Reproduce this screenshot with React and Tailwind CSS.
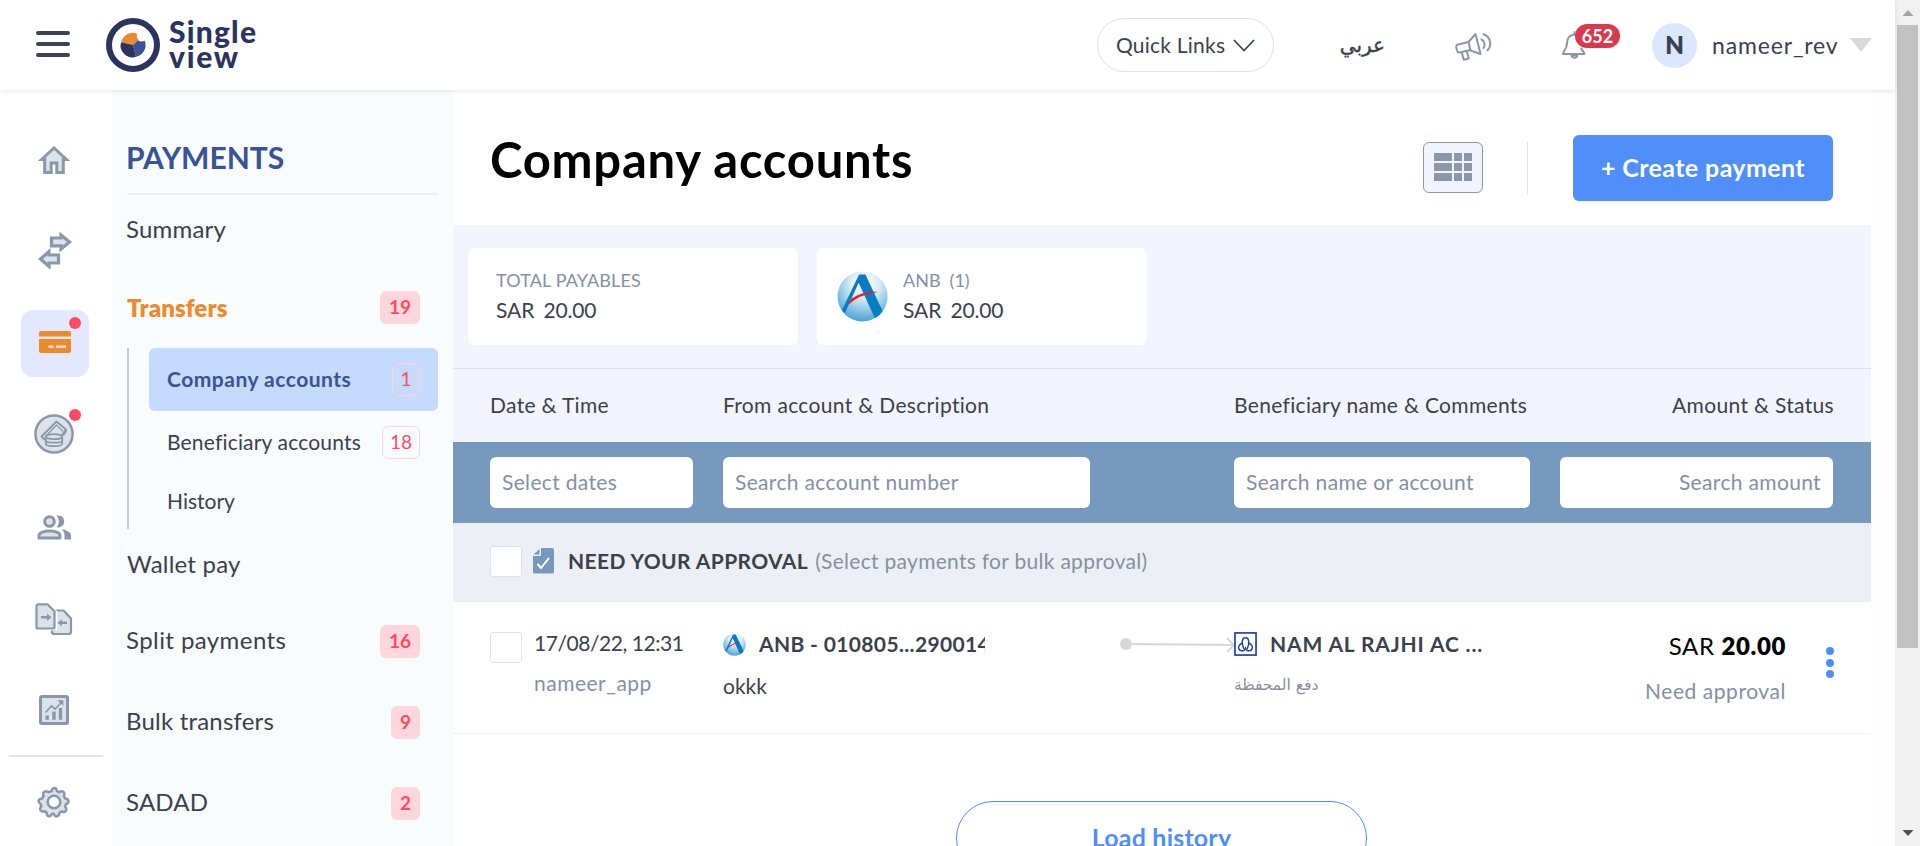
import { useId } from "react";

/* ---------- icons ---------- */

function HomeIcon() {
  return (
    <svg width="34" height="30" viewBox="0 0 34 30" className="block">
      <path d="M4.500 14.500 17 3l12.500 11.500h-3.200v13h-6.500v-9.500h-5.600v9.500H7.700v-13z" fill="#dbe2ea" stroke="#8b97a8" strokeWidth="3" />
    </svg>
  );
}

function TransferIcon() {
  return (
    <svg width="36" height="38" viewBox="0 0 36 38" className="block">
      <g fill="#dbe2ea" stroke="#8b97a8" strokeWidth="3.200">
        <path d="M14.500 7h9.500V4l8.500 7-8.500 7v-3.200h-9.500z" />
        <path d="M21.500 24H12V20.500l-8.500 7.500 8.500 7.500V32h9.500z" />
      </g>
    </svg>
  );
}

function CardIcon() {
  return (
    <svg width="32" height="22" viewBox="0 0 32 22" className="block">
      <path d="M2 0h28a2 2 0 0 1 2 2v3.500H0V2a2 2 0 0 1 2-2z" fill="#ec8b2e" />
      <path d="M0 8h32v12a2 2 0 0 1-2 2H2a2 2 0 0 1-2-2z" fill="#ec8b2e" />
      <path d="M9.500 15.700h5M17 15.700h10" stroke="#e3e8ff" strokeWidth="2.200" />
    </svg>
  );
}

function CoinsIcon() {
  return (
    <svg width="40" height="40" viewBox="0 0 40 40" fill="none" stroke="#8b97a8" className="block">
      <circle cx="20" cy="20" r="18.600" fill="#dbe2ea" strokeWidth="2.500" />
      <g strokeWidth="1.800" strokeLinejoin="round">
        <path d="M11 26 7.500 22.500 22.500 7.500l9.500 8-4 5.500" />
        <path d="M32 15.500c.500 2.500-1 4.500-4.500 6.500" />
        <path d="M12.500 21.500 22.500 11l6.500 6.500" strokeWidth="1.200" />
        <ellipse cx="20" cy="22.700" rx="8.200" ry="2.500" />
        <path d="M11.800 22.700v7c0 3.300 16.400 3.300 16.400 0v-7M11.800 26.200c0 3.300 16.400 3.300 16.400 0" />
      </g>
    </svg>
  );
}

function PeopleIcon() {
  return (
    <svg width="34" height="25" viewBox="0 0 34 25" className="block">
      <g fill="#dbe2ea" stroke="#8b97a8" strokeWidth="3">
        <circle cx="12.500" cy="6.500" r="4.800" />
        <path d="M2 23v-2.500c0-6 21-6 21 0V23z" strokeLinejoin="round" />
      </g>
      <path d="M19.500.600c10-1.600 10.500 13 0 11.700 3.200-3.200 3.200-8.200 0-11.700zM24.500 14.300c5 .700 9.500 3 9.500 6v4.200h-6.500v-4c0-2.500-1-4.500-3-6.200z" fill="#8b97a8" />
    </svg>
  );
}

function FilesIcon() {
  return (
    <svg width="38" height="33" viewBox="0 0 38 33" className="block">
      <g fill="#dbe2ea" stroke="#8b97a8" strokeWidth="2.200" strokeLinejoin="round">
        <path d="M21 7.500h7.500l7.500 8V29a2 2 0 0 1-2 2H19a2 2 0 0 1-2-2v-2.500h4z" />
      </g>
      <path d="M0 0h14l8.500 8.500v19H0z" fill="#fff" />
      <path d="M3 1.300h9.500l7 7V24a1.500 1.500 0 0 1-1.500 1.500H3A1.500 1.500 0 0 1 1.500 24V2.800A1.500 1.500 0 0 1 3 1.300z" fill="#dbe2ea" stroke="#8b97a8" strokeWidth="2.200" />
      <g fill="none" stroke="#8b97a8" strokeWidth="2.400">
        <path d="M6 14.200h8M32 19.800h-7" />
      </g>
      <path d="M12 10.500l4.500 3.700-4.500 3.700zM27 16l-4.500 3.800L27 23.500z" fill="#8b97a8" />
    </svg>
  );
}

function ChartIcon() {
  return (
    <svg width="30" height="30" viewBox="0 0 30 30" fill="none" stroke="#8b97a8" className="block">
      <rect x="1.500" y="1.500" width="27" height="27" rx="1.500" fill="#dbe2ea" strokeWidth="3" />
      <path d="M6.500 17.500l6-6.500 3.500 3L23 7" strokeWidth="1.700" />
      <path d="M18.500 5.300h5.800v5.800z" fill="#8b97a8" stroke="none" />
      <path d="M8.200 20.500v4.200M15 16.500v8.200M21.500 13v11.700" strokeWidth="3.400" />
    </svg>
  );
}

function GearIcon() {
  return (
    <svg width="34" height="34" viewBox="0 0 34 34" className="block" stroke="#8b97a8" strokeWidth="2.600" strokeLinejoin="round">
      <path
        d="M14.200 5.500C15 1 19 1 19.800 5.500q1.200.300 2.300 1C25.800 4 28.700 7 27 10.700q.800 1 1.200 2.300c4.500.300 4.800 4.500.700 6q-.100 1.400-.700 2.500c2.800 3.500.300 6.600-3.800 5q-1 .900-2.200 1.500c-.300 4.300-4.300 5-5.700 1h-1.900c-1.800 4-5.600 3-5.500-1.200q-1.200-.600-2.100-1.500c-4 1.400-6.300-2-3.500-5.100q-.500-1.100-.600-2.400C-.500 17 0 13.200 4.500 13q.500-1.300 1.400-2.500C4.200 6.800 7.200 4 10.900 6.500q1.500-.700 3.300-1z"
        fill="#dbe2ea"
        transform="translate(1 1) scale(.96)"
      />
      <circle cx="17" cy="17" r="6.300" fill="#fff" />
    </svg>
  );
}

function LogoMark() {
  return (
    <svg width="54" height="54" viewBox="0 0 54 54" className="block">
      <circle cx="27" cy="27" r="24" fill="none" stroke="#2b335f" strokeWidth="6" />
      <path d="M27 27 15.200 24.200A12 12 0 0 1 31 15.500q-.800 5 2 6.500z" fill="#ec8b2e" />
      <path d="M27 27l5-4.500q3 2 6.800.300A12 12 0 0 1 30 38.800z" fill="#3a5396" />
      <path d="M27 27l3 11.800A12 12 0 0 1 15 24.200z" fill="#2b335f" />
    </svg>
  );
}

function MegaphoneIcon() {
  return (
    <svg width="37" height="28" viewBox="0 0 37 28" fill="none" stroke="#8b97a8" strokeWidth="2" strokeLinejoin="round" strokeLinecap="round" className="block">
      <path d="M13.500 9 20.500 1l5 20-10-3.500z" />
      <path d="M13.500 9 2.500 11.700c-1.300.400-1.500 1.300-1.300 2.500l1 3.800c.400 1.300 1.300 1.700 2.500 1.400L15.500 17" />
      <path d="M6.800 19.500l2 7.300 5-1.300-2-7.500" />
      <path d="M26.500 6.500c3 1.500 4 5.500 2 8.500M28.500 1.300c7.500 2.500 8.500 12 4 16" />
    </svg>
  );
}

function BellIcon() {
  return (
    <svg width="26" height="28" viewBox="0 0 26 28" fill="none" stroke="#8b97a8" strokeWidth="2" strokeLinecap="round" strokeLinejoin="round" className="block">
      <path d="M12.500 3.500C7 4 5 8 5 12.500c0 6-4 7-4 10.500h21.500c0-2-2-2.500-3.300-5.500" />
      <path d="M12.500 1v2.500" />
      <path d="M9.500 24c.700 3.500 5.300 3.500 6 0z" />
    </svg>
  );
}

function AnbLogo({ size }) {
  const id = useId();
  return (
    <svg width={size} height={size} viewBox="0 0 52 52" className="block shrink-0">
      <defs>
        <radialGradient id={id} cx=".55" cy=".25" r=".8">
          <stop offset="0" stopColor="#fff" />
          <stop offset=".35" stopColor="#dcedf6" />
          <stop offset="1" stopColor="#3c9bd2" />
        </radialGradient>
        <clipPath id={id + "c"}>
          <circle cx="26" cy="26" r="25.500" />
        </clipPath>
      </defs>
      <circle cx="26" cy="26" r="25.500" fill={`url(#${id})`} />
      <g clipPath={`url(#${id + "c"})`}>
        <path d="M22.500 3.500h6.500L48 44l-9 5L22 12 8 43l-3-3z" fill="#057cc4" />
        <path d="M15 28q12-8 27-6.500Q22 24 11 35z" fill="#ee1c25" />
      </g>
    </svg>
  );
}

function RajhiLogo() {
  return (
    <svg width="23" height="24" viewBox="0 0 22 23" fill="none" stroke="#21429b" className="block shrink-0">
      <rect x=".900" y=".900" width="20.200" height="21.200" fill="#fff" strokeWidth="1.600" />
      <g strokeWidth="1.400" strokeLinecap="round">
        <path d="M9.300 15.800c-2-4-2.300-10.300 1.700-10.300s3.700 6.300 1.700 10.300" />
        <path d="M8 10.500c-3 1-4.500 4-3 6.300 1.500 2 5 1.500 6-1.300 1 2.800 4.500 3.300 6 1.300 1.500-2.300 0-5.300-3-6.300" />
      </g>
    </svg>
  );
}

function ApprovalIcon() {
  return (
    <svg width="21" height="26" viewBox="0 0 21 26" className="block shrink-0">
      <path d="M8 0h11a2 2 0 0 1 2 2v22a1.500 1.500 0 0 1-1.500 1.500h-18A1.500 1.500 0 0 1 0 24V8h6.500A1.500 1.500 0 0 0 8 6.500z" fill="#7799be" />
      <path d="M6.500 1v5.500H.500z" fill="#7799be" />
      <path d="M4.500 16l3.500 4 8-10" fill="none" stroke="#fff" strokeWidth="2" />
    </svg>
  );
}

function FlowArrow() {
  return (
    <svg width="116" height="16" viewBox="0 0 116 16" fill="none" stroke="#d6d7d9" className="block shrink-0">
      <circle cx="6" cy="8" r="6" fill="#d6d7d9" stroke="none" />
      <path d="M6 8l108 1" strokeWidth="2" />
      <path d="M107 2l7 7-7 7" strokeWidth="2" />
    </svg>
  );
}

/* ---------- pieces ---------- */

function Dot({ className }) {
  return <span className={`absolute size-3 rounded-full bg-[#ff4b66] ${className}`} />;
}

function Badge({ children, outline, wide }) {
  return (
    <span
      className={`flex h-[33px] items-center justify-center rounded-md text-[19px] text-[#ff4b66] ${
        outline
          ? `border border-[#ffd3da] ${wide ? "w-[38px]" : "w-7"}`
          : `bg-[#ffd6dc] font-bold ${wide ? "w-10" : "w-[29px]"}`
      }`}
    >
      {children}
    </span>
  );
}

function NavRow({ label, badge, wide, active, className }) {
  return (
    <div className={`flex items-center justify-between pr-[18px] ${className}`}>
      <span className={active ? "text-[24px] font-extrabold tracking-[0.1px] text-[#ec8b2e]" : "text-[24px] tracking-[0.2px]"}>{label}</span>
      {badge && <Badge wide={wide}>{badge}</Badge>}
    </div>
  );
}

function Rail() {
  return (
    <nav className="flex w-28 shrink-0 flex-col items-center bg-white">
      <div className="mt-[55px] -ml-1"><HomeIcon /></div>
      <div className="mt-[56px] -ml-[3px]"><TransferIcon /></div>
      <div className="relative mt-[41px] -ml-0.5 flex h-[67px] w-[68px] justify-center rounded-xl bg-[#e3e8ff] pt-[21px]">
        <CardIcon />
        <Dot className="top-[7px] left-12" />
      </div>
      <div className="relative mt-[37px] -ml-1">
        <CoinsIcon />
        <Dot className="-top-[5px] left-[35px]" />
      </div>
      <div className="mt-[61px] -ml-1"><PeopleIcon /></div>
      <div className="mt-[63px] -ml-1"><FilesIcon /></div>
      <div className="mt-[59px] -ml-1"><ChartIcon /></div>
      <div className="mt-[30px] h-0.5 w-[94px] bg-[#e4e5e7]" />
      <div className="mt-7 -ml-1"><GearIcon /></div>
    </nav>
  );
}

function Panel() {
  return (
    <aside className="w-[341px] shrink-0 overflow-hidden bg-[#f8fcfd] px-[15px]">
      <div className="flex h-[105px] items-center border-b-2 border-[#ebeff1] pt-[31px] text-[30px] font-bold text-[#3a5396]"><span className="-ml-px">PAYMENTS</span></div>
      <NavRow label="Summary" className="h-[68px] [&>span:first-child]:-ml-px" />
      <NavRow label="Transfers" badge="19" wide active className="mt-5 h-[49px]" />
      <div className="mt-4 h-[181px] border-l-2 border-[#c3c9d5] pl-[20px] text-[21px]">
        <div className="flex h-[63px] items-center justify-between rounded-md bg-[#c5dafc] pr-[18px] pl-[18px]">
          <span className="pb-0.5 font-bold tracking-[0.5px] text-[#3a5396]">Company accounts</span>
          <Badge outline>1</Badge>
        </div>
        <div className="flex h-[63px] items-center justify-between pr-[18px] pl-[18px]">
          <span className="pb-0.5 tracking-[0.18px]">Beneficiary accounts</span>
          <Badge outline wide>18</Badge>
        </div>
        <div className="flex h-[54px] items-center pl-[18px]">History</div>
      </div>
      <NavRow label="Wallet pay" className="h-[70px]" />
      <NavRow label="Split payments" badge="16" wide className="mt-0.5 h-[81px] [&>span:first-child]:-ml-px [&>span:first-child]:pb-[3px] [&>span:first-child]:tracking-[0.42px]" />
      <NavRow label="Bulk transfers" badge="9" className="h-[81px] [&>span:first-child]:-ml-px [&>span:first-child]:pb-[3px]" />
      <NavRow label="SADAD" badge="2" className="h-[81px] [&>span:first-child]:-ml-px [&>span:first-child]:pb-[3px]" />
    </aside>
  );
}

function Header() {
  return (
    <header className="relative z-10 flex h-[90px] shrink-0 items-center bg-white pl-9 shadow-[0_1px_5px_rgba(0,0,0,0.1)]">
      <div className="flex w-[34px] flex-col gap-[7px] pb-0.5">
        <span className="h-1 rounded-full bg-[#3b4554]" />
        <span className="h-1 rounded-full bg-[#3b4554]" />
        <span className="h-1 rounded-full bg-[#3b4554]" />
      </div>
      <div className="ml-9 flex items-center pb-px"><LogoMark /></div>
      <div className="ml-[9px] flex w-[95px] flex-col pb-[3px] text-[30px] leading-[25px] font-black text-[#2b335f]">
        <span className="tracking-[1.2px]">Single</span>
        <span className="tracking-[1.7px]">view</span>
      </div>
      <div className="ml-[833px] flex h-[54px] w-[177px] items-center rounded-full border border-[#dde1e8] pl-[18px]">
        <span className="text-[21px] tracking-[0.22px]">Quick Links</span>
        <svg width="22" height="13" viewBox="0 0 22 13" className="ml-[8px]" fill="none" stroke="#3b4252" strokeWidth="1.700">
          <path d="M1 1l10 10.500L21 1" />
        </svg>
      </div>
      <span dir="rtl" className="ml-[67px] w-[44px] font-['DejaVu_Sans'] text-[20px] text-nowrap [-webkit-text-stroke:0.4px]">عربي</span>
      <div className="ml-[70px] pt-1"><MegaphoneIcon /></div>
      <div className="relative ml-[70px]">
        <BellIcon />
        <span className="absolute -top-[7px] left-[13px] flex h-6 w-[45px] items-center justify-center rounded-full bg-[#d8394b] text-[18px] font-bold text-white">652</span>
      </div>
      <div className="ml-[64px] flex size-[45px] items-center justify-center rounded-full bg-[#dbe7ff] text-[24px] font-extrabold">N</div>
      <span className="ml-[15px] w-[126px] text-[23px] tracking-[0.85px] text-nowrap">nameer_rev</span>
      <svg width="22" height="14" viewBox="0 0 22 14" className="ml-3 block"><path d="M0 0h22L11 14z" fill="#d8d8d8" /></svg>
    </header>
  );
}

function GridButton() {
  return (
    <div className="flex h-[51px] w-[60px] items-center justify-center rounded-md border border-[#8b97a8] bg-[#f2f5fd]">
      <div className="grid grid-cols-[18px_8px_8px] gap-x-[2px] gap-y-[2px]">
        {Array.from({ length: 9 }, (_, i) => (
          <span key={i} className="h-2 bg-[#8b97a8]" />
        ))}
      </div>
    </div>
  );
}

function SearchBox({ children, className }) {
  return <div className={`flex h-[51px] items-center rounded-md bg-white px-3 pb-0.5 text-[21px] tracking-[0.34px] text-nowrap text-[#8590a2] ${className}`}>{children}</div>;
}

function Checkbox({ className }) {
  return <span className={`block h-[31px] w-8 shrink-0 rounded-[3px] border border-[#dde3ec] bg-white ${className}`} />;
}

function Main() {
  return (
    <main className="flex w-[1418px] shrink-0 flex-col overflow-hidden bg-white">
      <div className="flex h-[135px] shrink-0 items-center pl-[37px]">
        <h1 className="w-[933px] pt-1 text-[49px] font-bold tracking-[0.75px] text-black">Company accounts</h1>
        <div className="flex items-center pt-[21px]">
          <div className="pb-0.5"><GridButton /></div>
          <span className="ml-11 h-[53px] w-px bg-[#dfe3ea]" />
          <div className="ml-[45px] flex h-[66px] w-[260px] items-center justify-center rounded-md bg-[#508ffa] text-[25px] font-bold tracking-[0.4px] text-white">+ Create payment</div>
        </div>
      </div>

      <div className="flex h-36 shrink-0 gap-[19px] border-b border-[#dadfe9] bg-[#f2f5fd] pt-[23px] pl-[15px]">
        <div className="flex h-[97px] w-[330px] flex-col justify-center rounded-md bg-white pb-0.5 pl-[28px]">
          <span className="text-[18px] leading-[29px] tracking-[0.15px] text-[#8590a2]">TOTAL PAYABLES</span>
          <span className="flex gap-[9px] text-[21px] leading-[30px]"><span>SAR</span><span className="tracking-[-0.2px]">20.00</span></span>
        </div>
        <div className="flex h-[97px] w-[330px] items-center rounded-md bg-white pl-5">
          <AnbLogo size={51} />
          <div className="ml-[15px] flex flex-col pb-0.5">
            <span className="flex gap-[9px] text-[18px] leading-[29px] text-[#8590a2]"><span>ANB</span><span>(1)</span></span>
            <span className="flex gap-[9px] text-[21px] leading-[30px]"><span>SAR</span><span className="tracking-[-0.2px]">20.00</span></span>
          </div>
        </div>
      </div>

      <div className="flex h-[73px] shrink-0 items-center bg-[#f2f5fd] px-[37px] pb-0.5 text-[21px] tracking-[0.33px]">
        <span className="w-[233px]">Date &amp; Time</span>
        <span className="w-[511px]">From account &amp; Description</span>
        <span className="flex-1">Beneficiary name &amp; Comments</span>
        <span>Amount &amp; Status</span>
      </div>

      <div className="flex h-[81px] shrink-0 items-center bg-[#7799be] pl-[37px]">
        <SearchBox className="w-[203px]">Select dates</SearchBox>
        <SearchBox className="ml-[30px] w-[367px]">Search account number</SearchBox>
        <SearchBox className="ml-[144px] w-[296px]">Search name or account</SearchBox>
        <SearchBox className="ml-[30px] w-[273px] justify-end">Search amount</SearchBox>
      </div>

      <div className="flex h-[79px] shrink-0 items-center border-b border-[#e9edf4] bg-[#ecf0f5] pb-0.5 pl-[37px]">
        <Checkbox />
        <div className="ml-[11px]"><ApprovalIcon /></div>
        <span className="ml-[14px] text-[21px] font-bold tracking-[0.4px]">NEED YOUR APPROVAL</span>
        <span className="ml-[7px] text-[21px] tracking-[0.29px] text-[#8590a2]">(Select payments for bulk approval)</span>
      </div>

      <div className="flex h-[132px] shrink-0 border-b border-[#eceff5] pl-[37px] text-[21px] text-nowrap">
        <Checkbox className="mt-[30px]" />
        <div className="ml-3 w-[189px] pt-[25px]">
          <div className="leading-8 tracking-[-0.45px]">17/08/22, 12:31</div>
          <div className="mt-2 leading-8 tracking-[0.5px] text-[#8590a2]">nameer_app</div>
        </div>
        <div className="w-[397px] pt-[26px]">
          <div className="flex w-[262px] items-center overflow-hidden leading-8">
            <AnbLogo size={23} />
            <span className="ml-[13px] font-bold tracking-[0.35px]">ANB - 010805...290014</span>
          </div>
          <div className="mt-[10px] leading-8">okkk</div>
        </div>
        <div className="w-[114px] pt-[34px]"><FlowArrow /></div>
        <div className="w-[402px] pt-[26px]">
          <div className="flex items-center leading-8">
            <RajhiLogo />
            <span className="ml-[13px] font-bold tracking-[0.85px]">NAM AL RAJHI AC ...</span>
          </div>
          <div className="mt-[11px] font-['DejaVu_Sans'] text-[15.500px] leading-7 text-[#8590a2]">دفع المحفظة</div>
        </div>
        <div className="w-[150px] pt-[26px] text-right">
          <div className="flex justify-end gap-[7px] text-[24px] leading-9 text-black">
            <span className="tracking-[0.6px]">SAR</span>
            <span className="font-extrabold tracking-[0.6px]">20.00</span>
          </div>
          <div className="mt-[11px] leading-8 tracking-[0.55px] text-[#8590a2]">Need approval</div>
        </div>
        <div className="ml-[40px] flex flex-col gap-[3.500px] pt-[45px]">
          <span className="size-2 rounded-full bg-[#508ffa]" />
          <span className="size-2 rounded-full bg-[#508ffa]" />
          <span className="size-2 rounded-full bg-[#508ffa]" />
        </div>
      </div>

      <div className="mt-[67px] ml-[503px] flex h-[74px] w-[411px] shrink-0 items-center justify-center rounded-full border border-[#508ffa] text-[25px] font-bold tracking-[0.2px] text-[#508ffa]">Load history</div>
    </main>
  );
}

function Scrollbar() {
  return (
    <div className="flex w-[25px] shrink-0 flex-col items-center bg-[#f1f1f1]">
      <svg width="12" height="25" viewBox="0 0 12 25" className="block shrink-0"><path d="M.500 16h11L6 10z" fill="#a3a3a3" /></svg>
      <div className="h-[623px] w-[21px] bg-[#c1c1c1]" />
      <div className="flex-1" />
      <svg width="12" height="25" viewBox="0 0 12 25" className="block shrink-0"><path d="M.500 9h11L6 15z" fill="#505050" /></svg>
    </div>
  );
}

export default function App() {
  return (
    <div className="flex h-[846px] w-[1920px] overflow-hidden bg-white font-['Lato','DejaVu_Sans',sans-serif] text-[#3b3f4e]">
      <div className="flex w-[1895px] shrink-0 flex-col">
        <Header />
        <div className="flex min-h-0 flex-1">
          <Rail />
          <Panel />
          <Main />
          <div className="flex-1 bg-[#fefefe]" />
        </div>
      </div>
      <Scrollbar />
    </div>
  );
}
